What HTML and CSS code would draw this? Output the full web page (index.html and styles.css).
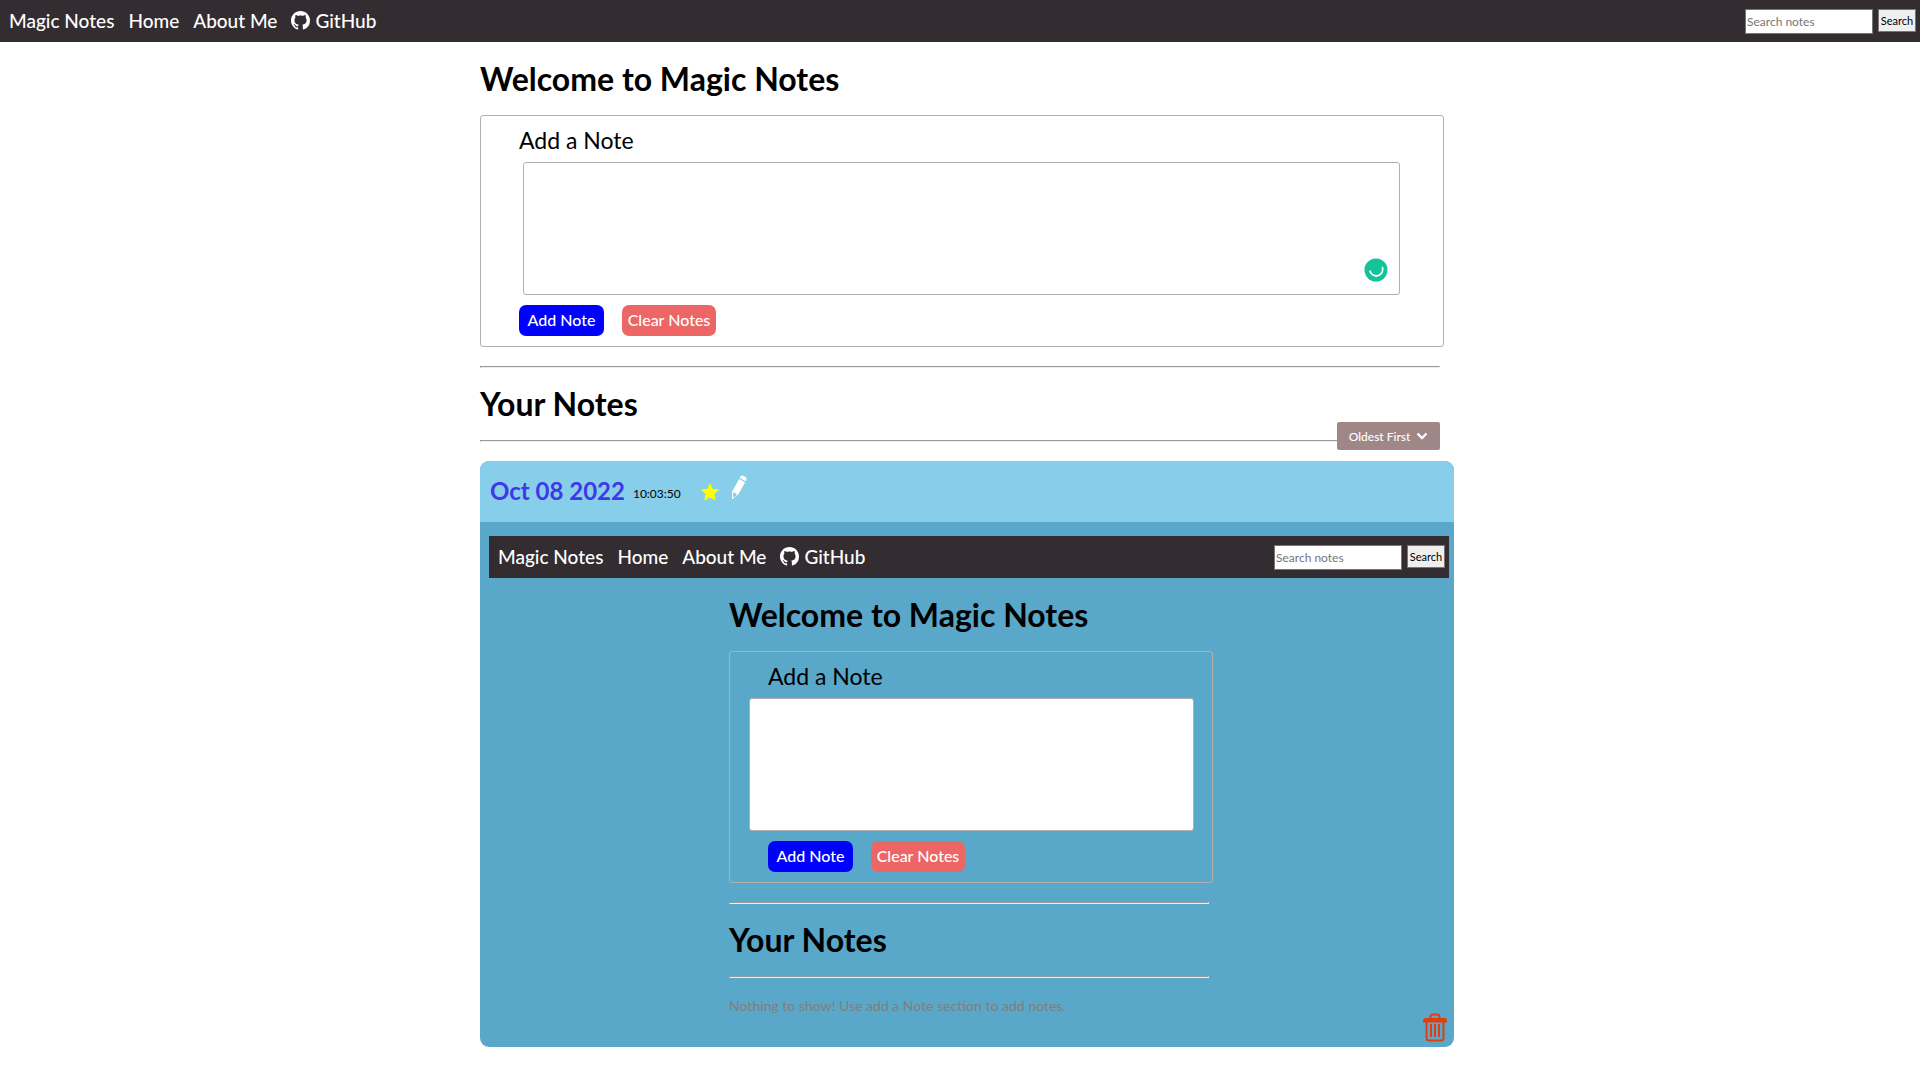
FILE: index.html
```html
<!DOCTYPE html>
<html lang="en">
<head>
<meta charset="utf-8">
<title>Magic Notes</title>
<link rel="stylesheet" href="styles.css">
</head>
<body>
<svg class="sprite" aria-hidden="true">
  <symbol id="github" viewBox="0 0 16 16"><path d="M8 0C3.58 0 0 3.58 0 8c0 3.54 2.29 6.53 5.47 7.59.4.07.55-.17.55-.38 0-.19-.01-.82-.01-1.49-2.01.37-2.53-.49-2.69-.94-.09-.23-.48-.94-.82-1.13-.28-.15-.68-.52-.01-.53.63-.01 1.08.58 1.23.82.72 1.21 1.87.87 2.33.66.07-.52.28-.87.51-1.07-1.78-.2-3.64-.89-3.64-3.95 0-.87.31-1.59.82-2.15-.08-.2-.36-1.02.08-2.12 0 0 .67-.21 2.2.82.64-.18 1.32-.27 2-.27s1.36.09 2 .27c1.53-1.04 2.2-.82 2.2-.82.44 1.1.16 1.92.08 2.12.51.56.82 1.27.82 2.15 0 3.07-1.87 3.75-3.65 3.95.29.25.54.73.54 1.48 0 1.07-.01 1.93-.01 2.2 0 .21.15.46.55.38A8.01 8.01 0 0 0 16 8c0-4.42-3.58-8-8-8z"/></symbol>
</svg>

<nav class="navbar">
  <a class="nav-link" href="#">Magic Notes</a>
  <a class="nav-link" href="#">Home</a>
  <a class="nav-link" href="#">About Me</a>
  <a class="nav-link" href="#"><svg class="github-icon" aria-hidden="true"><use href="#github"/></svg>GitHub</a>
  <form class="search">
    <input class="search-input" type="search" placeholder="Search notes" aria-label="Search notes">
    <button class="search-button" type="button">Search</button>
  </form>
</nav>

<main class="content">
  <h1 class="heading">Welcome to Magic Notes</h1>
  <section class="note-form">
    <label class="note-label" for="note">Add a Note</label>
    <div class="note-field">
      <textarea class="note-text" id="note"></textarea>
      <svg class="checker" viewBox="0 0 24 24" aria-hidden="true"><circle cx="12" cy="12" r="11.5" fill="#15c39a"/><path d="M6 13.200a6.300 6.300 0 0 0 12.500-3.700" fill="none" stroke="#fff" stroke-width="1.700" stroke-linecap="round"/></svg>
    </div>
    <div class="actions">
      <button class="button button-add" type="button">Add Note</button>
      <button class="button button-clear" type="button">Clear Notes</button>
    </div>
  </section>
  <hr class="rule">
  <h1 class="heading">Your Notes</h1>
  <div class="sort-bar">
    <hr class="rule rule-flush">
    <button class="sort-button" type="button">Oldest First
      <svg class="chevron" viewBox="0 0 12 8" aria-hidden="true"><path d="M1.500 1.500 6 6l4.500-4.500" fill="none" stroke="#fff" stroke-width="2.300"/></svg>
    </button>
  </div>

  <article class="note">
    <header class="note-header">
      <h2 class="note-date">Oct 08 2022</h2>
      <time class="note-time">10:03:50</time>
      <button class="icon-button" type="button" aria-label="Star note"><svg class="star" viewBox="0 0 20 19" aria-hidden="true"><path d="M10 .5 12.700 6.500 19.300 7.200 14.400 11.700 15.800 18.300 10 15 4.200 18.300 5.600 11.700.7 7.200 7.300 6.500z" fill="#ff0" stroke="#ff0" stroke-linejoin="round"/></svg></button>
      <button class="icon-button" type="button" aria-label="Edit note"><svg class="pencil" viewBox="0 0 16 25" aria-hidden="true"><path d="M9.300 1.700Q10.500 0 12.500.8L14.400 1.900Q16.200 3 15.300 5L14.700 6.200 8.700 3zM8.100 4.100 14.100 7.300 7.300 19.400.9 24.500 1.100 16.500zM2.200 17.400 2 21.600 3.400 22.300 6.300 19.600 5.200 19.300 4.600 18.100 3.300 18z" fill="#fff" fill-rule="evenodd"/></svg></button>
    </header>
    <div class="note-body">
      <nav class="navbar">
        <a class="nav-link" href="#">Magic Notes</a>
        <a class="nav-link" href="#">Home</a>
        <a class="nav-link" href="#">About Me</a>
        <a class="nav-link" href="#"><svg class="github-icon" aria-hidden="true"><use href="#github"/></svg>GitHub</a>
        <form class="search">
          <input class="search-input" type="search" placeholder="Search notes" aria-label="Search notes">
          <button class="search-button" type="button">Search</button>
        </form>
      </nav>
      <div class="content">
        <h1 class="heading">Welcome to Magic Notes</h1>
        <section class="note-form">
          <label class="note-label" for="inner-note">Add a Note</label>
          <div class="note-field note-field-wide">
            <textarea class="note-text" id="inner-note"></textarea>
          </div>
          <div class="actions">
            <button class="button button-add" type="button">Add Note</button>
            <button class="button button-clear" type="button">Clear Notes</button>
          </div>
        </section>
        <hr class="rule">
        <h1 class="heading">Your Notes</h1>
        <hr class="rule rule-flush">
        <p class="empty">Nothing to show! Use add a Note section to add notes.</p>
      </div>
    </div>
    <button class="icon-button delete" type="button" aria-label="Delete note"><svg class="trash" viewBox="0 0 24 29" aria-hidden="true"><g fill="none" stroke="#e23d0c" stroke-width="2"><path d="M7.500 6V4Q7.500 1.500 10 1.500h4Q16.500 1.500 16.500 4V6"/><path d="M3.500 9v16q0 2.500 2.500 2.500h12q2.500 0 2.500-2.500V9"/><path d="M8 11v13M12 11v13M16 11v13"/></g><path d="M2 5h20q2 0 2 4.500H0Q0 5 2 5z" fill="#e23d0c"/></svg></button>
  </article>
</main>
</body>
</html>
```

FILE: styles.css
```css
* {
  box-sizing: border-box;
}

body {
  margin: 0;
  background: #fff;
  color: #000;
  font-family: Lato, "Liberation Sans", sans-serif;
}

button,
input,
textarea {
  font-family: inherit;
}

.sprite {
  display: none;
}

/* Navigation bar */
.navbar {
  display: flex;
  align-items: center;
  gap: 14px;
  height: 42px;
  padding: 0 4px 0 9px;
  background: #332d31;
}

.nav-link {
  display: flex;
  align-items: center;
  gap: 5px;
  padding-bottom: 1px;
  color: #fff;
  font-size: 19px;
  line-height: 24px;
  font-weight: 500;
  text-decoration: none;
  white-space: nowrap;
}

.github-icon {
  width: 19px;
  height: 19px;
  fill: #fff;
}

.search {
  display: flex;
  align-items: flex-start;
  gap: 5px;
  margin-left: auto;
}

.search-input {
  appearance: none;
  width: 128px;
  height: 25px;
  margin: 0;
  padding: 0 1px;
  border: 1px solid #767676;
  border-radius: 0;
  background: #fff;
  font-size: 12px;
}

.search-input::placeholder {
  color: #757575;
}

.search-button {
  width: 38px;
  height: 23px;
  padding: 0;
  border: 1px solid #767676;
  background: #efefef;
  color: #000;
  font-size: 11px;
}

/* Page column */
.content {
  width: 50%;
  margin: 0 auto;
  padding-top: 1px;
}

.heading {
  margin: 0;
  padding: 18px 0;
  font-size: 32px;
  line-height: 36px;
  font-weight: 700;
  white-space: nowrap;
}

.note-form {
  margin-right: -4px;
  padding-bottom: 10px;
  border: 1px solid #b0b0b0;
  border-radius: 3px;
}

.note-label {
  display: block;
  padding: 2px 0 0 38px;
  font-size: 23px;
  line-height: 44px;
}

.note-field {
  position: relative;
  margin: 0 43px 10px 42px;
}

.note-field-wide {
  margin: 0 18px 10px 19px;
}

.note-text {
  display: block;
  width: 100%;
  height: 133px;
  border: 1px solid #b0b0b0;
  border-radius: 3px;
  background: #fff;
  resize: none;
}

.checker {
  position: absolute;
  right: 12px;
  bottom: 13px;
  width: 24px;
  height: 24px;
}

.actions {
  display: flex;
  gap: 18px;
  padding-left: 38px;
}

.button {
  height: 31px;
  padding: 0 0 2px;
  border: 0;
  border-radius: 7px;
  color: #fff;
  font-size: 16px;
  font-weight: 500;
}

.button-add {
  width: 85px;
  background: #00f;
}

.button-clear {
  width: 94px;
  background: #ec6666;
}

.rule {
  margin: 19px 0 0;
  border: 1px solid;
  border-color: #9a9a9a #eee #eee #9a9a9a;
}

.rule-flush {
  margin: 0;
}

.sort-bar {
  position: relative;
}

.sort-button {
  position: absolute;
  right: 0;
  bottom: -8px;
  display: flex;
  align-items: center;
  justify-content: center;
  gap: 6px;
  width: 103px;
  height: 28px;
  padding: 0;
  border: 0;
  border-radius: 2px;
  background: #a08787;
  color: #fff;
  font-size: 12px;
  font-weight: 500;
}

.chevron {
  width: 12px;
  height: 8px;
}

/* Saved note */
.note {
  position: relative;
  margin: 19px -14px 0 0;
  overflow: hidden;
  border-radius: 9px;
  background: #5aa8c9;
}

.note-header {
  display: flex;
  align-items: center;
  height: 61px;
  padding: 0 0 2px 10px;
  background: #87ceeb;
}

.note-date {
  margin: 0 8px 0 0;
  color: #4038e8;
  font-size: 24px;
  line-height: 30px;
  font-weight: 700;
}

.note-time {
  margin-right: 20px;
  padding-top: 6px;
  font-size: 12px;
  line-height: 18px;
}

.icon-button {
  display: flex;
  padding: 0;
  border: 0;
  background: none;
}

.star {
  width: 18px;
  height: 18px;
  margin: 2px 12px 0 0;
}

.pencil {
  width: 16px;
  height: 25px;
  margin-bottom: 6px;
}

.note-body {
  padding: 14px 5px 30px 9px;
}

.empty {
  margin: 18px 0 1px;
  color: #808080;
  font-size: 14px;
  line-height: 20px;
  font-weight: 500;
  white-space: nowrap;
}

.delete {
  position: absolute;
  right: 7px;
  bottom: 5px;
}

.trash {
  width: 24px;
  height: 29px;
}
```
